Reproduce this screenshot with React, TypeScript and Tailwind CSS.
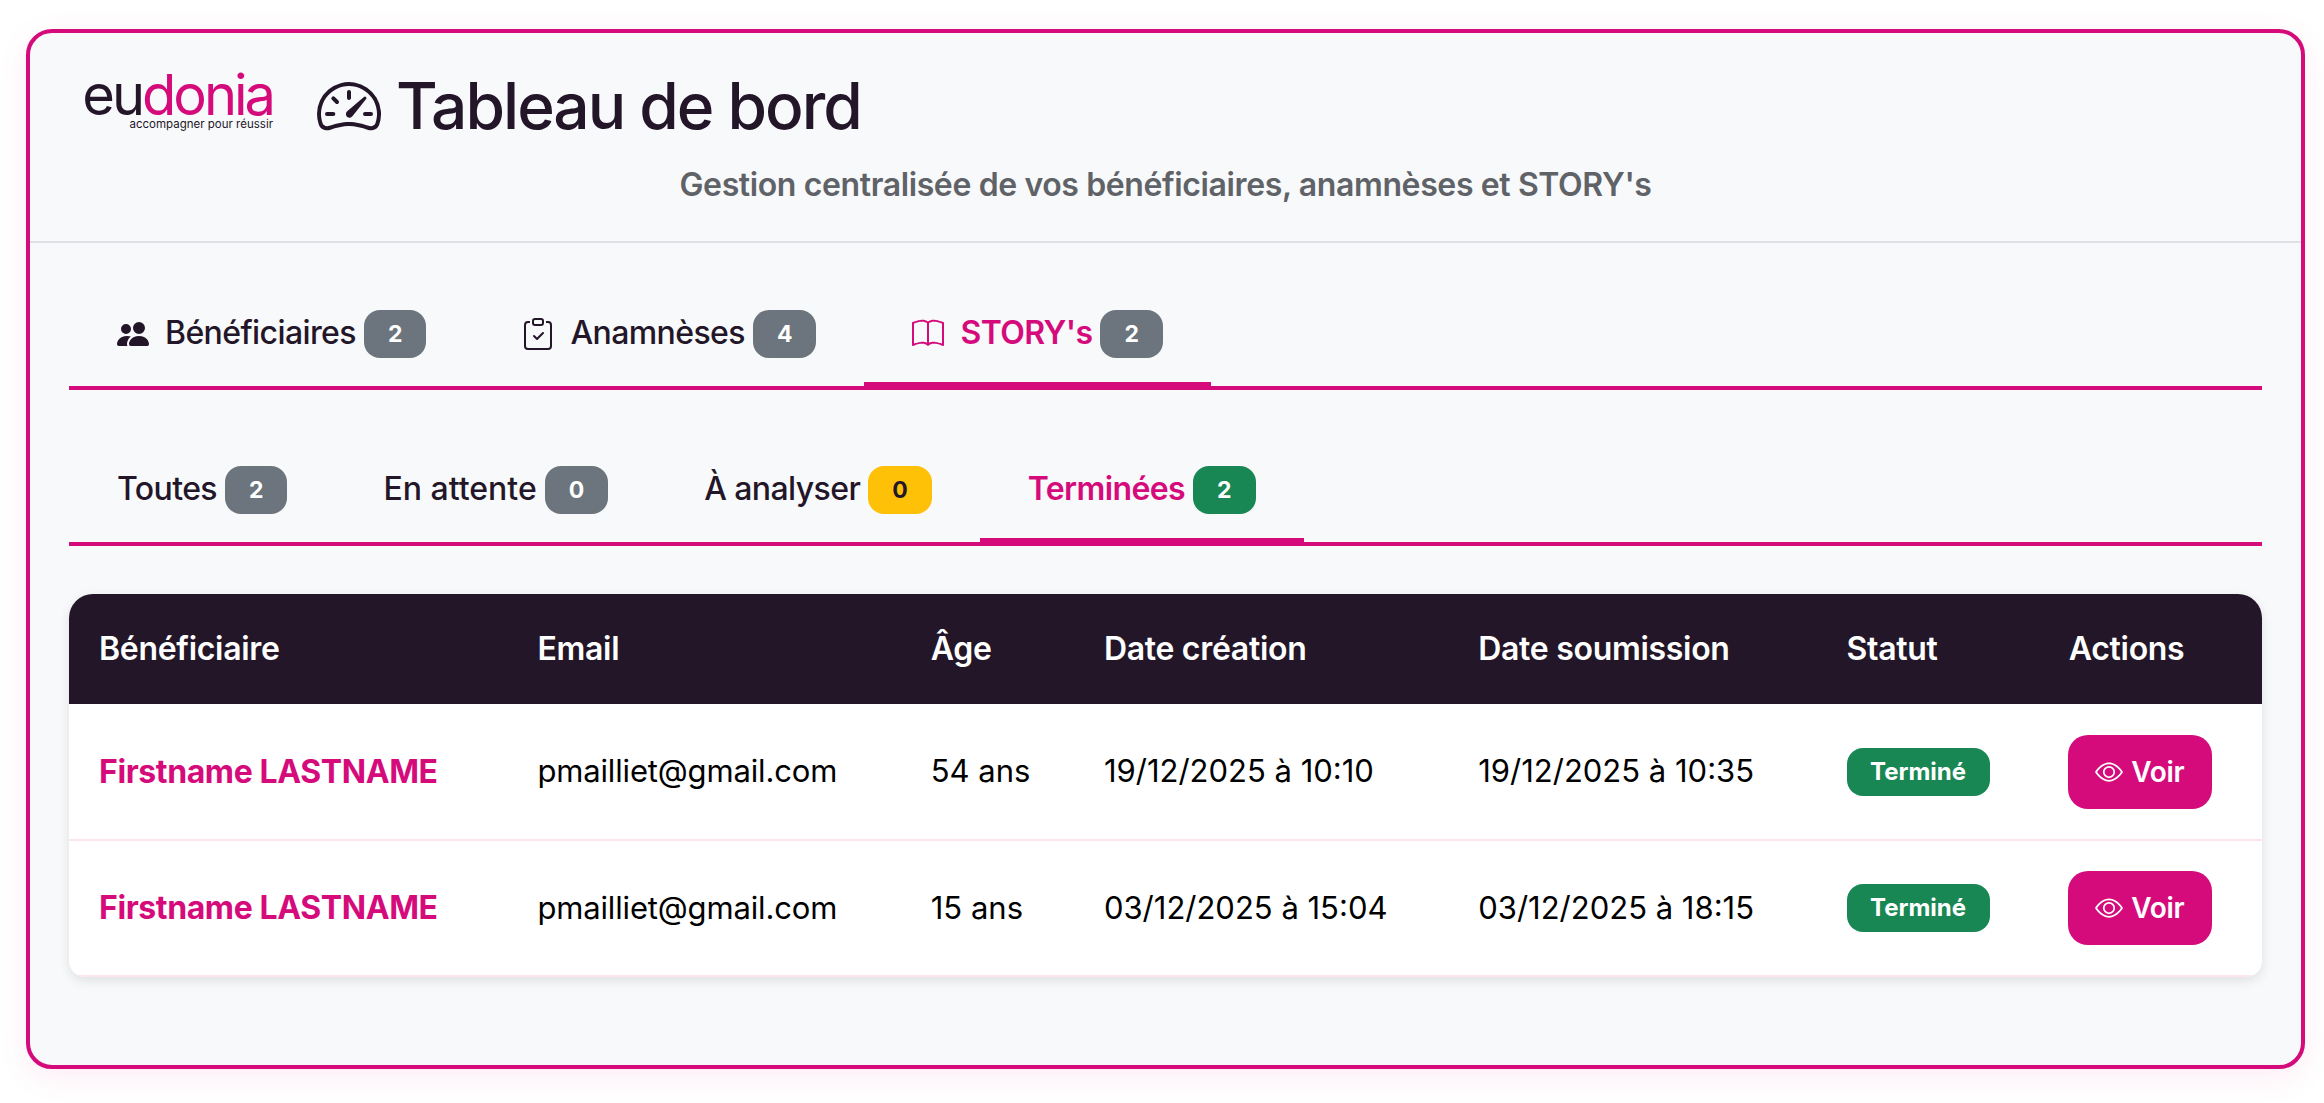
import { BsBook, BsClipboardCheck, BsEye, BsPeopleFill, BsSpeedometer2 } from 'react-icons/bs';
import type { ReactNode } from 'react';

const rows = [
  { name: 'Firstname LASTNAME', email: 'pmailliet@gmail.com', age: '54 ans', created: '19/12/2025 à 10:10', submitted: '19/12/2025 à 10:35' },
  { name: 'Firstname LASTNAME', email: 'pmailliet@gmail.com', age: '15 ans', created: '03/12/2025 à 15:04', submitted: '03/12/2025 à 18:15' },
];

function Count({ value, tone = 'gray' }: { value: number; tone?: 'gray' | 'yellow' | 'green' }) {
  const toneClass =
    tone === 'yellow'
      ? 'bg-[#ffc107] text-[#231629]'
      : tone === 'green'
        ? 'bg-[#198754] text-white'
        : 'bg-[#6c757d] text-white';

  return (
    <span className={`ml-[8px] flex h-[48px] items-center justify-center rounded-[16px] px-[24px] text-[23px] font-bold tracking-normal ${toneClass}`}>
      {value}
    </span>
  );
}

function Tab({ label, count, icon, active, tone }: { label: string; count: number; icon?: ReactNode; active?: boolean; tone?: 'gray' | 'yellow' | 'green' }) {
  return (
    <div
      className={`-mb-[4px] flex h-[104px] items-center px-[48px] text-[32px] ${
        label === 'En attente' ? 'tracking-normal' : 'tracking-[-0.6px]'
      } ${active ? 'border-b-[8px] border-[#d50b7c] font-semibold text-[#d50b7c]' : 'pb-[8px] font-medium text-[#231629]'}`}
    >
      {icon && <span className="mr-[16px] flex text-[32px]">{icon}</span>}
      <span className="pb-[2px]">{label}</span>
      <Count value={count} tone={tone} />
    </div>
  );
}

function Logo() {
  return (
    <div className="-mt-[3px] flex w-[234px] flex-col items-end self-start">
      <div className="text-[56px] leading-[48px] font-normal tracking-[-3px] text-[#231629]">
        eu<span className="text-[#d50b7c]">donia</span>
      </div>
      <div className="-mt-[2px] text-[11.5px] leading-[14px] text-[#231629]">accompagner pour réussir</div>
    </div>
  );
}

export default function App() {
  return (
    <div className="min-h-[1103px] bg-white pt-[29px] pl-[26px] font-['Inter',sans-serif]">
      <div className="h-[1040px] w-[2279px] rounded-[26px] border-[4px] border-[#d50b7c] bg-[#f8f9fa] shadow-[0_8px_32px_rgba(213,11,124,0.08)]">
        <header className="h-[210px] border-b-2 border-[#dee2e6]">
          <div className="flex items-center pt-[41px] pl-[9px]">
            <Logo />
            <BsSpeedometer2 className="ml-[44px] size-[64px] text-[#231629]" />
            <h1 className="ml-[15px] text-[64px] leading-[64px] font-medium tracking-[-2px] text-[#231629]">Tableau de bord</h1>
          </div>
          <p className="mt-[27px] text-center text-[32px] leading-[40px] font-semibold tracking-[-0.38px] text-[#5f6368]">
            Gestion centralisée de vos bénéficiaires, anamnèses et STORY's
          </p>
        </header>

        <div className="px-[39px]">
          <nav className="mt-[43px] flex border-b-[4px] border-[#d50b7c]">
            <Tab label="Bénéficiaires" count={2} icon={<BsPeopleFill />} />
            <Tab label="Anamnèses" count={4} icon={<BsClipboardCheck />} />
            <Tab label="STORY's" count={2} icon={<BsBook />} active />
          </nav>

          <nav className="mt-[52px] flex border-b-[4px] border-[#d50b7c]">
            <Tab label="Toutes" count={2} />
            <Tab label="En attente" count={0} />
            <Tab label="À analyser" count={0} tone="yellow" />
            <Tab label="Terminées" count={2} tone="green" active />
          </nav>

          <div className="mt-[48px] overflow-hidden rounded-t-[24px] rounded-b-[16px] bg-white shadow-[0_4px_12px_rgba(0,0,0,0.1)]">
            <table className="w-full table-fixed border-collapse text-left text-[31px]">
              <colgroup>
                <col className="w-[438px]" />
                <col className="w-[393px]" />
                <col className="w-[173px]" />
                <col className="w-[374px]" />
                <col className="w-[368px]" />
                <col className="w-[222px]" />
                <col className="w-[223px]" />
              </colgroup>
              <thead className="bg-[#231629] text-white">
                <tr className="h-[110px]">
                  {['Bénéficiaire', 'Email', 'Âge', 'Date création', 'Date soumission', 'Statut', 'Actions'].map((title) => (
                    <th key={title} className="pl-[30px] text-[32px] font-semibold tracking-[-0.3px]">
                      {title}
                    </th>
                  ))}
                </tr>
              </thead>
              <tbody className="text-black">
                {rows.map((row) => (
                  <tr key={row.age} className="h-[136px] border-b-2 border-[#fce4ef]">
                    <td className="pl-[30px] text-[32px] font-bold tracking-[-0.4px] text-[#d50b7c]">{row.name}</td>
                    <td className="pl-[30px] tracking-[-0.15px]">{row.email}</td>
                    <td className="pl-[30px]">{row.age}</td>
                    <td className="pl-[30px]">{row.created}</td>
                    <td className="pl-[30px]">{row.submitted}</td>
                    <td className="pl-[30px]">
                      <span className="flex h-[48px] w-[143px] items-center justify-center rounded-[16px] bg-[#198754] text-[24px] font-bold text-white">
                        Terminé
                      </span>
                    </td>
                    <td className="pl-[29px]">
                      <button className="flex h-[74px] w-[144px] items-center justify-center gap-[8px] rounded-[20px] bg-[#d50b7c] text-[28px] font-semibold tracking-[-0.3px] text-white">
                        <BsEye className="size-[28px]" />
                        Voir
                      </button>
                    </td>
                  </tr>
                ))}
              </tbody>
            </table>
          </div>
        </div>
      </div>
    </div>
  );
}
